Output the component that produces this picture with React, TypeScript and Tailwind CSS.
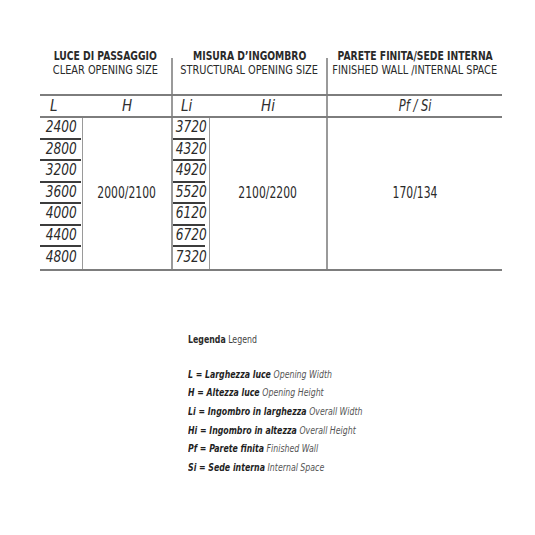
import React from 'react';

const L_VALUES = ['2400', '2800', '3200', '3600', '4000', '4400', '4800'];
const LI_VALUES = ['3720', '4320', '4920', '5520', '6120', '6720', '7320'];

const LEGEND = [
  { key: 'L = Larghezza luce', en: 'Opening Width' },
  { key: 'H = Altezza luce', en: 'Opening Height' },
  { key: 'Li = Ingombro in larghezza', en: 'Overall Width' },
  { key: 'Hi = Ingombro in altezza', en: 'Overall Height' },
  { key: 'Pf = Parete finita', en: 'Finished Wall' },
  { key: 'Si = Sede interna', en: 'Internal Space' },
];

const font = {
  fontFamily: '"DejaVu Sans Condensed", "Liberation Sans Narrow", "Roboto Condensed", "Liberation Sans", sans-serif',
};

const Divider = () => <div className="w-[2px] bg-[#9a9a9a] shrink-0" />;

const NumberColumn: React.FC<{ values: string[]; lineClass: string }> = ({ values, lineClass }) => (
  <div className="flex flex-col h-full">
    {values.map((v, i) => (
      <div key={v} className="h-[21.5px] flex flex-col">
        <div className="flex-1 flex items-center justify-center italic text-[15px] text-[#2a2a2a] leading-none">
          <span className="inline-block scale-x-[0.9]">{v}</span>
        </div>
        {i < values.length - 1 && <div className={`h-[2px] bg-[#3c3c3c] ${lineClass}`} />}
      </div>
    ))}
  </div>
);

const Heading: React.FC<{ width: string; it: string; en: string }> = ({ width, it, en }) => (
  <div className={`${width} flex flex-col items-center pt-[1px] leading-[14px]`}>
    <span className="inline-block font-bold text-[13px] whitespace-nowrap scale-x-[0.79]">{it}</span>
    <span className="inline-block text-[12.5px] whitespace-nowrap scale-x-[0.87]">{en}</span>
  </div>
);

export default function App() {
  return (
    <div className="w-[535px] h-[535px] bg-white overflow-hidden" style={font}>
      <div className="pt-[48px] pl-[40px]">
        <div className="w-[462px]">
          {/* group headings */}
          <div className="flex h-[46px] text-[#2a2a2a]">
            <Heading width="w-[131px]" it="LUCE DI PASSAGGIO" en="CLEAR OPENING SIZE" />
            <div className="w-[2px] h-[36px] self-end bg-[#9a9a9a]" />
            <Heading width="w-[153px]" it="MISURA D’INGOMBRO" en="STRUCTURAL OPENING SIZE" />
            <div className="w-[2px] h-[36px] self-end bg-[#9a9a9a]" />
            <Heading width="w-[174px]" it="PARETE FINITA/SEDE INTERNA" en="FINISHED WALL /INTERNAL SPACE" />
          </div>
          <div className="h-[2px] bg-[#7d7d7d]" />

          {/* sub headings */}
          <div className="flex h-[20px] italic text-[15px] text-[#2f2f2f] leading-none">
            <div className="w-[43px] flex items-center pl-[10px]">L</div>
            <div className="w-[88px] flex items-center justify-center">H</div>
            <Divider />
            <div className="w-[37px] flex items-center pl-[8px]">Li</div>
            <div className="w-[116px] flex items-center justify-center">Hi</div>
            <Divider />
            <div className="w-[174px] flex items-center justify-center">
              <span className="inline-block scale-x-[0.85]">Pf / Si</span>
            </div>
          </div>
          <div className="h-[2px] bg-[#7d7d7d]" />

          {/* values */}
          <div className="flex h-[151px] text-[15px] text-[#2a2a2a]">
            <div className="w-[43px] border-r-[1.5px] border-[#9a9a9a]">
              <NumberColumn values={L_VALUES} lineClass="mr-[1px]" />
            </div>
            <div className="w-[88px] flex items-center justify-center leading-none">
              <span className="inline-block scale-x-[0.8]">2000/2100</span>
            </div>
            <Divider />
            <div className="w-[37px] border-r-[1.5px] border-[#9a9a9a]">
              <NumberColumn values={LI_VALUES} lineClass="mr-[4px]" />
            </div>
            <div className="w-[116px] flex items-center justify-center leading-none">
              <span className="inline-block scale-x-[0.8]">2100/2200</span>
            </div>
            <Divider />
            <div className="w-[174px] flex items-center justify-center leading-none">
              <span className="inline-block scale-x-[0.8]">170/134</span>
            </div>
          </div>
          <div className="h-[2px] bg-[#7d7d7d]" />
        </div>
      </div>

      {/* legend */}
      <div className="pl-[188px] pt-[62px] text-[10px] text-[#2a2a2a]">
        <div className="origin-left scale-x-[0.87]">
          <div className="leading-[14px]">
            <span className="font-bold">Legenda</span> <span className="text-[#444]">Legend</span>
          </div>
          <div className="mt-[18px] flex flex-col">
            {LEGEND.map((l) => (
              <div key={l.key} className="h-[18.6px] flex items-center italic whitespace-nowrap">
                <span className="font-bold text-[#1f1f1f]">{l.key}</span>
                <span className="ml-[3px] text-[#555]">{l.en}</span>
              </div>
            ))}
          </div>
        </div>
      </div>
    </div>
  );
}
